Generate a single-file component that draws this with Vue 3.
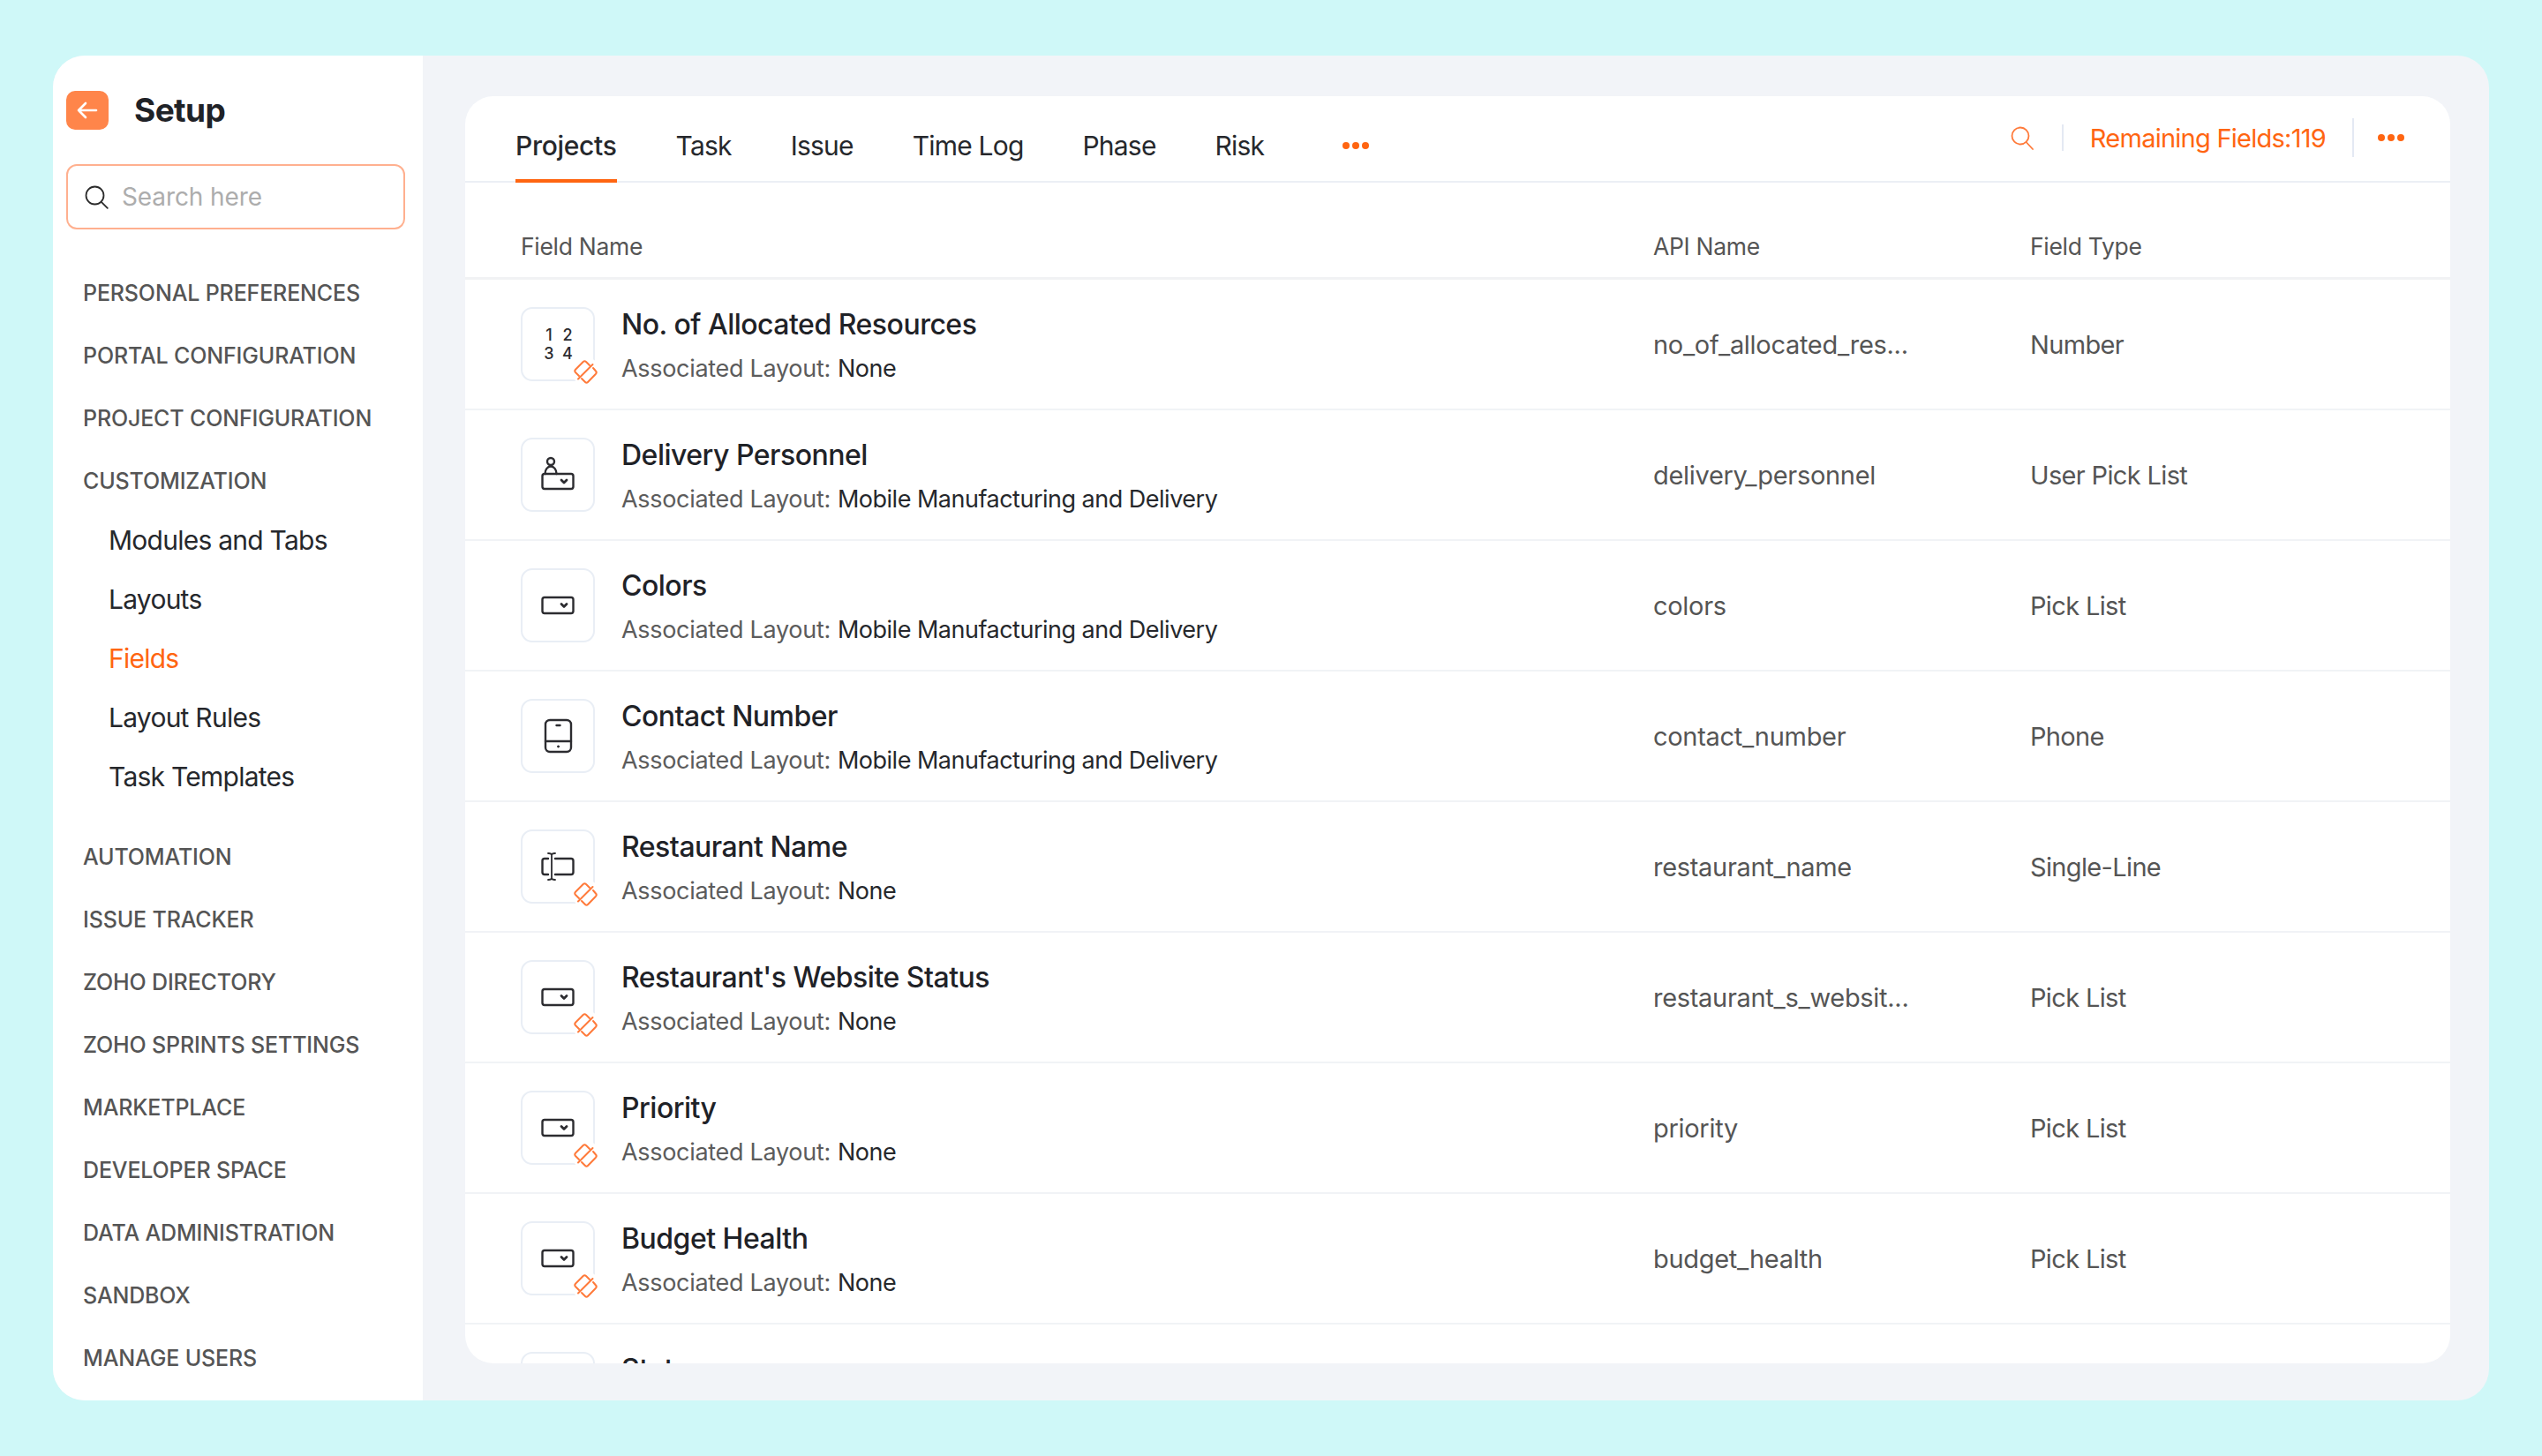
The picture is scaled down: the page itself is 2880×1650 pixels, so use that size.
<script setup>
const topMenu = ['PERSONAL PREFERENCES', 'PORTAL CONFIGURATION', 'PROJECT CONFIGURATION', 'CUSTOMIZATION']
const subMenu = ['Modules and Tabs', 'Layouts', 'Fields', 'Layout Rules', 'Task Templates']
const bottomMenu = ['AUTOMATION', 'ISSUE TRACKER', 'ZOHO DIRECTORY', 'ZOHO SPRINTS SETTINGS', 'MARKETPLACE', 'DEVELOPER SPACE', 'DATA ADMINISTRATION', 'SANDBOX', 'MANAGE USERS']
const tabs = ['Projects', 'Task', 'Issue', 'Time Log', 'Phase', 'Risk']

const mobile = 'Mobile Manufacturing and Delivery'
const fields = [
  { name: 'No. of Allocated Resources', layout: 'None', api: 'no_of_allocated_res...', type: 'Number', icon: 'number', linked: true },
  { name: 'Delivery Personnel', layout: mobile, api: 'delivery_personnel', type: 'User Pick List', icon: 'user' },
  { name: 'Colors', layout: mobile, api: 'colors', type: 'Pick List', icon: 'pick' },
  { name: 'Contact Number', layout: mobile, api: 'contact_number', type: 'Phone', icon: 'phone' },
  { name: 'Restaurant Name', layout: 'None', api: 'restaurant_name', type: 'Single-Line', icon: 'line', linked: true },
  { name: "Restaurant's Website Status", layout: 'None', api: 'restaurant_s_websit...', type: 'Pick List', icon: 'pick', linked: true },
  { name: 'Priority', layout: 'None', api: 'priority', type: 'Pick List', icon: 'pick', linked: true },
  { name: 'Budget Health', layout: 'None', api: 'budget_health', type: 'Pick List', icon: 'pick', linked: true },
  { name: 'Status', layout: 'None', api: 'status', type: 'Pick List', icon: 'pick', linked: true }
]
</script>

<template>
  <div class="page">
    <div class="window">
      <aside class="sidebar">
        <div class="side-head">
          <div class="back">
            <svg width="24" height="20" viewBox="0 0 24 20" fill="none" stroke="#fff" stroke-width="2.6" stroke-linecap="round" stroke-linejoin="round">
              <path d="M2 10h20M10 2l-8 8 8 8" />
            </svg>
          </div>
          <div class="side-title">Setup</div>
        </div>
        <div class="side-search">
          <svg width="27" height="27" viewBox="0 0 27 27" fill="none" stroke="#2b2b2b" stroke-width="1.8" stroke-linecap="round">
            <circle cx="11.500" cy="11.500" r="10" />
            <path d="M18.800 18.800l7 7" />
          </svg>
          <span>Search here</span>
        </div>
        <nav class="menu">
          <div v-for="item in topMenu" :key="item" class="menu-top">{{ item }}</div>
          <div class="submenu">
            <div v-for="item in subMenu" :key="item" class="menu-sub" :class="{ active: item === 'Fields' }">{{ item }}</div>
          </div>
          <div v-for="item in bottomMenu" :key="item" class="menu-top">{{ item }}</div>
        </nav>
      </aside>

      <main class="main">
        <div class="card">
          <header class="tabbar">
            <div class="tabs">
              <div v-for="tab in tabs" :key="tab" class="tab" :class="{ active: tab === 'Projects' }">{{ tab }}</div>
              <div class="tab-more"><i></i><i></i><i></i></div>
            </div>
            <div class="tools">
              <svg width="26" height="27" viewBox="0 0 26 27" fill="none" stroke="#ff7a3a" stroke-width="1.8" stroke-linecap="round">
                <circle cx="11" cy="11" r="9.500" />
                <path d="M18 18.500l7 7.500" />
              </svg>
              <span class="divider short"></span>
              <span class="remaining">Remaining Fields:119</span>
              <span class="divider"></span>
              <div class="tool-more"><i></i><i></i><i></i></div>
            </div>
          </header>

          <div class="table-head">
            <div>Field Name</div>
            <div>API Name</div>
            <div>Field Type</div>
          </div>

          <div class="rows">
            <div v-for="f in fields" :key="f.name" class="row">
              <div class="name-cell">
                <div class="icon-box">
                  <svg width="80" height="80" viewBox="1 2 80 80" fill="none" stroke="#2c2c30" stroke-width="2.4" stroke-linecap="round" stroke-linejoin="round">
                    <g v-if="f.icon === 'number'">
                      <text x="31" y="38" class="num">1</text>
                      <text x="52" y="38" class="num">2</text>
                      <text x="31" y="59" class="num">3</text>
                      <text x="52" y="59" class="num">4</text>
                    </g>
                    <g v-else-if="f.icon === 'user'">
                      <circle cx="33" cy="27" r="4" />
                      <path d="M26.500 41c0-5 3-8.500 6.500-8.500s6.500 3.500 6.500 8.500" />
                      <rect x="23.500" y="41" width="35" height="17" rx="2.500" />
                      <path d="M45 48l3 3 3-3" stroke-width="2.800" />
                    </g>
                    <g v-else-if="f.icon === 'pick'">
                      <rect x="23.500" y="33" width="35" height="18" rx="2.500" />
                      <path d="M45 40.500l3 3 3-3" stroke-width="2.800" />
                    </g>
                    <g v-else-if="f.icon === 'phone'">
                      <rect x="27" y="24" width="29" height="36" rx="5" />
                      <path d="M27 48h29M39.500 30h4" />
                      <circle cx="41.500" cy="54" r="1" fill="#2c2c30" stroke-width="1" />
                    </g>
                    <g v-else>
                      <path d="M30 33h-4a2.500 2.500 0 0 0-2.500 2.500v13a2.500 2.500 0 0 0 2.500 2.500h4M38 33h18a2.500 2.500 0 0 1 2.500 2.500v13a2.500 2.500 0 0 1-2.500 2.500h-18" />
                      <path d="M34 29v26M30 27c2 0 4 0 4 2 0-2 2-2 4-2M30 57c2 0 4 0 4-2 0 2 2 2 4 2" stroke-width="1.800" />
                    </g>
                  </svg>
                  <div v-if="f.linked" class="link-badge">
                    <svg width="30" height="30" viewBox="5 4 30 30" fill="none" stroke="#ff7a3a" stroke-width="2" stroke-linecap="round" stroke-linejoin="round">
                      <path d="M12 24l-4-4q-1.500-1.700 0-3.300l8.700-8.700q1.600-1.500 3.300 0l4 4" />
                      <path d="M28 15l3 3.500q1.500 1.500 0 3.200l-9 9.300q-1.500 1.500-3 0l-4-4" />
                      <path d="M11 27.500l16.500-16.500" />
                    </svg>
                  </div>
                </div>
                <div class="name-text">
                  <div class="field-name">{{ f.name }}</div>
                  <div class="field-layout"><span>Associated Layout:</span><b>{{ f.layout }}</b></div>
                </div>
              </div>
              <div class="cell">{{ f.api }}</div>
              <div class="cell type">{{ f.type }}</div>
            </div>
          </div>
        </div>
      </main>
    </div>
  </div>
</template>

<style>
html, body {
  margin: 0;
  background: #cff8f8;
}
</style>

<style scoped>
.page {
  height: 1650px;
  box-sizing: border-box;
  padding: 63px 60px;
  font-family: Inter, "Noto Sans", sans-serif;
  background: #cff8f8;
}

.window {
  display: flex;
  height: 1524px;
  border-radius: 36px;
  overflow: hidden;
  background: #f2f4f8;
}

.sidebar {
  width: 419px;
  flex: none;
  background: #fff;
  box-sizing: border-box;
  padding: 40px 0 0 15px;
}

.side-head {
  display: flex;
  align-items: center;
  height: 44px;
}

.back {
  width: 48px;
  height: 44px;
  border-radius: 10px;
  background: #ff854a;
  display: flex;
  align-items: center;
  justify-content: center;
}

.side-title {
  margin-left: 29px;
  margin-top: -1px;
  font-size: 37px;
  font-weight: 700;
  color: #1f2227;
  letter-spacing: -0.6px;
}

.side-search {
  margin-top: 39px;
  width: 384px;
  height: 74px;
  box-sizing: border-box;
  border: 2px solid #ffb08f;
  border-radius: 12px;
  display: flex;
  align-items: center;
  padding-left: 19px;
  gap: 15px;
  font-size: 28px;
  letter-spacing: -0.1px;
  color: #adadad;
}

.menu {
  margin-top: 37px;
  padding-left: 19px;
}

.menu-top {
  height: 71px;
  line-height: 71px;
  font-size: 25px;
  font-weight: 500;
  color: #555;
  letter-spacing: -0.15px;
  white-space: nowrap;
}

.submenu {
  margin-top: -2px;
  margin-bottom: 22px;
}

.menu-sub {
  height: 67px;
  line-height: 67px;
  padding-left: 29px;
  font-size: 30px;
  color: #26282c;
  letter-spacing: -0.75px;
}

.menu-sub.active {
  color: #ff6511;
}

.main {
  flex: 1;
  min-width: 0;
  box-sizing: border-box;
  padding: 46px 44px 42px 48px;
}

.card {
  height: 100%;
  display: flex;
  flex-direction: column;
  background: #fff;
  border-radius: 32px;
  overflow: hidden;
}

.tabbar {
  height: 98px;
  flex: none;
  box-sizing: border-box;
  display: flex;
  justify-content: space-between;
  border-bottom: 2px solid #ebeff5;
  padding: 0 52px 0 57px;
}

.tabs {
  display: flex;
  gap: 67px;
  height: 98px;
}

.tab {
  box-sizing: border-box;
  height: 98px;
  padding-top: 36px;
  line-height: 40px;
  font-size: 30px;
  color: #26282c;
  letter-spacing: -0.8px;
  white-space: nowrap;
}

.tab.active {
  font-weight: 500;
  letter-spacing: -0.3px;
  border-bottom: 4px solid #ff6511;
}

.tab-more,
.tool-more {
  display: flex;
  gap: 3px;
  align-items: center;
}

.tab-more {
  height: 40px;
  margin-top: 36px;
  margin-left: 22px;
}

.tab-more i,
.tool-more i {
  width: 8px;
  height: 8px;
  border-radius: 50%;
  background: #ff6511;
}

.tool-more {
  margin-left: 27px;
}

.tools {
  display: flex;
  align-items: center;
  height: 94px;
}

.divider {
  width: 2px;
  height: 44px;
  background: #e4e9f3;
  margin-left: 30px;
}

.divider.short {
  height: 30px;
  margin-left: 32px;
}

.remaining {
  margin-left: 30px;
  font-size: 29px;
  color: #ff6511;
  letter-spacing: -0.75px;
}

.table-head {
  flex: none;
  height: 110px;
  box-sizing: border-box;
  padding: 52px 0 0 63px;
  line-height: 40px;
  border-bottom: 3px solid #f1f2f4;
  font-size: 26.500px;
  color: #555;
  letter-spacing: -0.3px;
  display: grid;
  grid-template-columns: 1283px 427px 1fr;
}

.rows {
  flex: 1;
  min-height: 0;
}

.row {
  height: 148px;
  box-sizing: border-box;
  padding-left: 63px;
  border-bottom: 2px solid #f1f3f6;
  display: grid;
  grid-template-columns: 1283px 427px 1fr;
  align-items: center;
}

.name-cell {
  display: flex;
  align-items: center;
  gap: 30px;
}

.icon-box {
  position: relative;
  flex: none;
  width: 84px;
  height: 84px;
  box-sizing: border-box;
  border: 2px solid #e9eef5;
  border-radius: 13px;
}

.icon-box svg {
  display: block;
}

.num {
  font-family: Inter, sans-serif;
  font-size: 18px;
  font-weight: 500;
  fill: #2c2c30;
  stroke: none;
  text-anchor: middle;
}

.link-badge {
  position: absolute;
  right: -8px;
  bottom: -7px;
  width: 32px;
  height: 32px;
  border-radius: 50%;
  background: #fff;
  display: flex;
  align-items: center;
  justify-content: center;
}

.name-text {
  display: flex;
  flex-direction: column;
  gap: 10px;
  padding-top: 6px;
}

.field-name {
  font-size: 32px;
  line-height: 40px;
  font-weight: 500;
  color: #1f2227;
  letter-spacing: -0.5px;
  white-space: nowrap;
}

.field-layout {
  font-size: 27px;
  line-height: 40px;
  color: #5c5c5c;
  letter-spacing: -0.3px;
  white-space: nowrap;
}

.field-layout b {
  font-weight: 400;
  color: #26282c;
  margin-left: 8px;
  letter-spacing: -0.5px;
}

.cell {
  font-size: 29px;
  color: #555;
  letter-spacing: -0.3px;
  white-space: nowrap;
}

.cell.type {
  letter-spacing: -0.65px;
}
</style>
